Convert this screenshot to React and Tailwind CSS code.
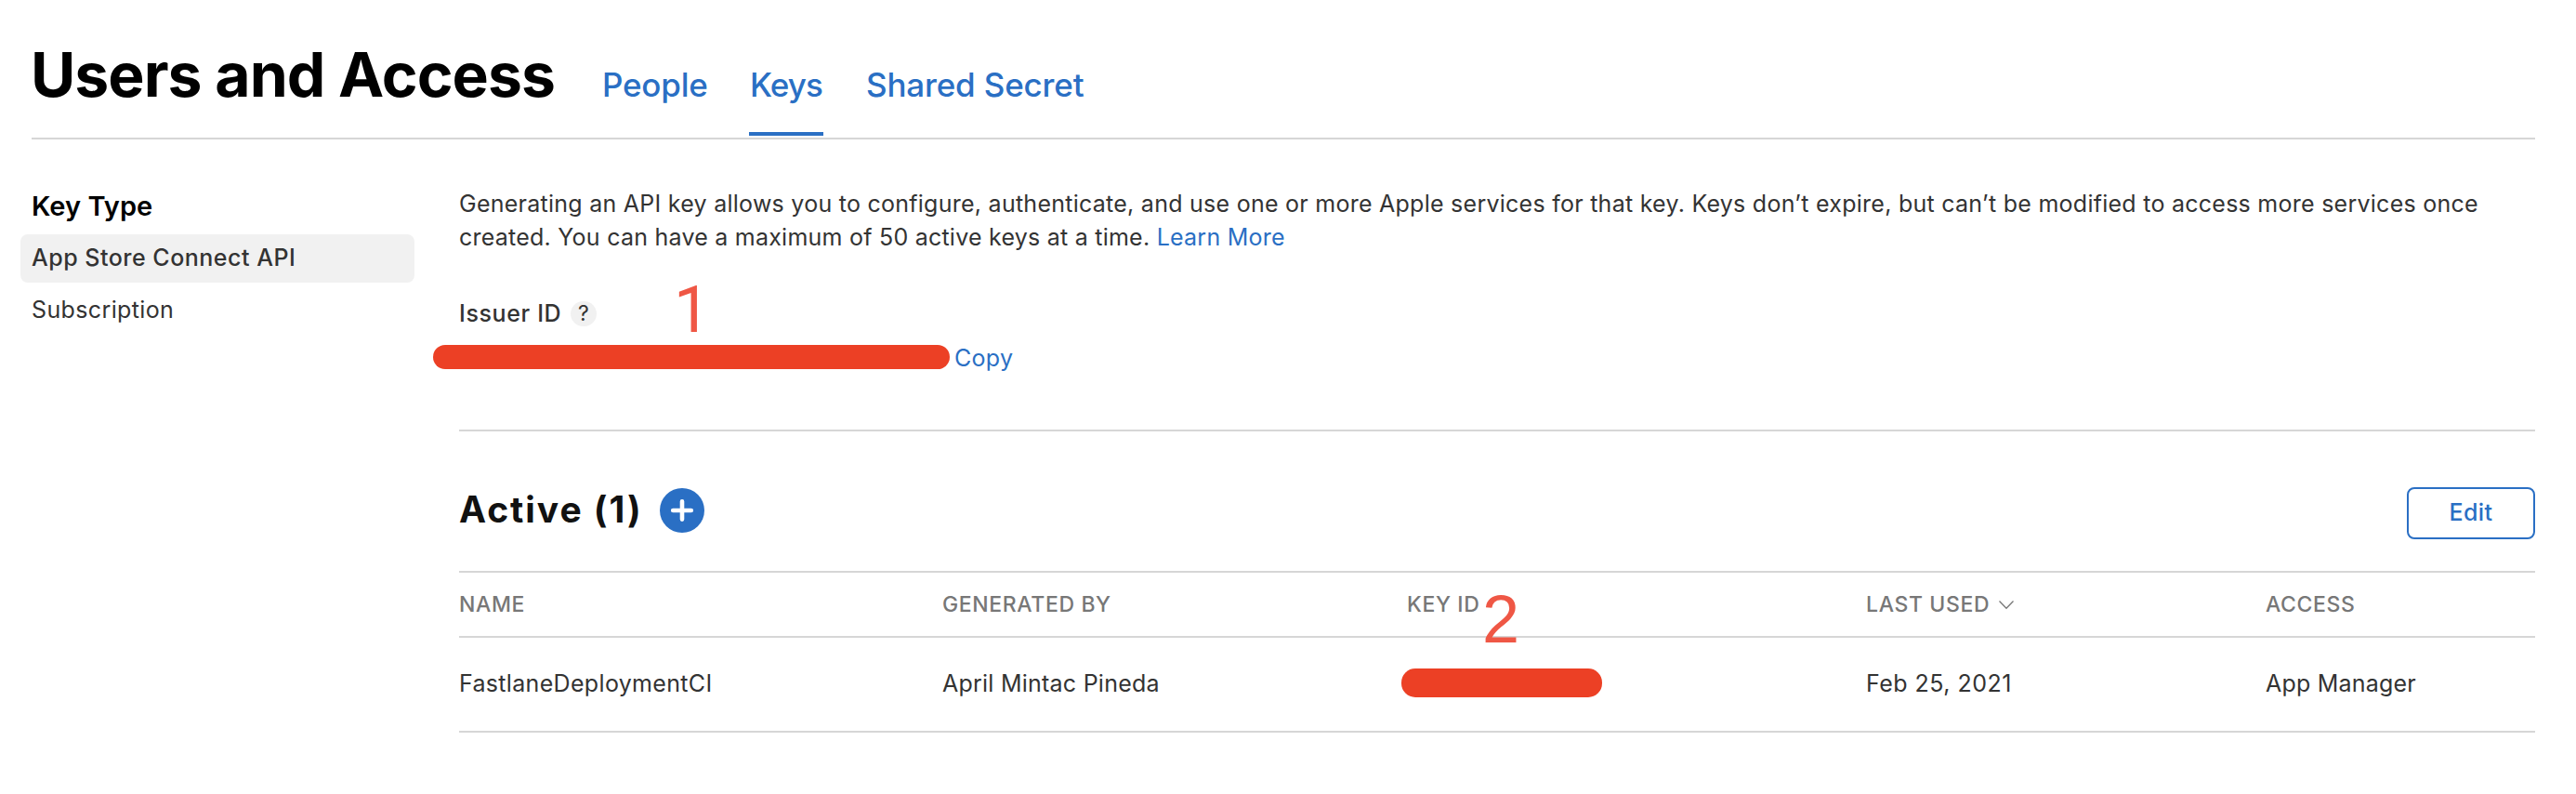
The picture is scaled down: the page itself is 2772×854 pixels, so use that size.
import React from "react";

const columns = "grid grid-cols-[520px_500px_494px_430px_290px]";

function Header() {
  return (
    <header className="mx-[34px] mr-[44px] flex h-[150px] border-b-2 border-[#d6d6d6]">
      <h1 className="w-[614px] whitespace-nowrap pt-[40px] text-[66px] font-bold leading-[80px] tracking-[-0.0146em] text-black">
        <span className="-ml-px">Users and Access</span>
      </h1>
      <nav className="flex h-[146px] whitespace-nowrap text-[35px] font-medium leading-[44px] text-[#2a6fc4]">
        <a className="w-[158px] pt-[69px] tracking-[-0.006em]">People</a>
        <a className="mr-[46px] w-[80px] border-b-4 border-[#2a6fc4] pt-[69px] pl-px tracking-[-0.025em]">Keys</a>
        <a className="pt-[69px] tracking-[-0.005em]">Shared Secret</a>
      </nav>
    </header>
  );
}

function Sidebar() {
  return (
    <aside className="ml-[22px] w-[424px] shrink-0 pt-[54px] text-[25px] text-[#333]">
      <h2 className="pl-3 text-[29px] font-semibold leading-[36px] tracking-[0.002em] text-black">Key Type</h2>
      <div className="mt-3 h-[52px] rounded-lg bg-[#f1f1f1] pl-3 font-medium leading-[50px] tracking-[0.02em]">
        App Store Connect API
      </div>
      <div className="mt-1 h-[52px] pl-3 leading-[50px] tracking-[0.015em]">Subscription</div>
    </aside>
  );
}

function Issuer() {
  return (
    <section className="relative border-b-2 border-[#d6d6d6] pt-[51px] pb-[59px]">
      <p className="whitespace-nowrap leading-[36px] tracking-[0.0103em]">
        Generating an API key allows you to configure, authenticate, and use one or more Apple services for that key. Keys
        don’t expire, but can’t be modified to access more services once
        <br />
        <span className="tracking-[0.0095em]">
          created. You can have a maximum of 50 active keys at a time.{" "}
          <a className="text-[#2a6fc4]">Learn More</a>
        </span>
      </p>
      <div className="mt-[46px] flex h-[36px] items-center">
        <span className="w-[120px] font-medium leading-[36px] tracking-[0.025em]">Issuer ID</span>
        <span className="flex h-[27px] w-[28px] items-center justify-center rounded-full bg-[#f1f1f1] text-[23px] leading-[26px]">
          ?
        </span>
      </div>
      <div className="mt-3 flex h-[36px]">
        <div className="mt-1 -ml-[28px] h-[26px] w-[556px] rounded-[13px] bg-[#ec4025]" />
        <a className="ml-[5px] leading-[36px] tracking-[0.012em] text-[#2a6fc4]">Copy</a>
      </div>
      <span className="absolute top-[148px] left-[231px] font-['Roboto',sans-serif] text-[70px] leading-[70px] text-[#ef5745]">
        1
      </span>
    </section>
  );
}

function ActiveKeys() {
  return (
    <section className="relative">
      <div className="flex h-[150px] items-start justify-between">
        <div className="flex items-start pt-[61px]">
          <h2 className="w-[216px] whitespace-nowrap text-[39px] font-bold leading-[46px] tracking-[0.05em] text-[#111]">
            Active (1)
          </h2>
          <svg width="48" height="48" viewBox="0 0 48 48">
            <circle cx="24" cy="24" r="24" fill="#2a6fc4" />
            <path d="M24 14.2v19.4M14.2 24h19.6" stroke="#fff" strokeWidth="4.6" strokeLinecap="round" />
          </svg>
        </div>
        <button className="mt-[60px] h-[56px] w-[138px] rounded-lg border-2 border-[#2a6fc4] pb-[2px] text-[25px] font-medium leading-[50px] tracking-[0.016em] text-[#2a6fc4]">
          Edit
        </button>
      </div>
      <div
        className={`${columns} h-[72px] border-y-2 border-[#d6d6d6] text-[23px] font-medium leading-[69px] tracking-[0.027em] text-[#777]`}
      >
        <span>NAME</span>
        <span>GENERATED BY</span>
        <span>KEY ID</span>
        <span className="flex">
          LAST USED
          <svg className="mt-[29px] ml-[9px]" width="18" height="12" viewBox="0 0 18 12" fill="none">
            <path d="M1.5 1.5 9 9.3l7.500-7.800" stroke="#777" strokeWidth="1.3" />
          </svg>
        </span>
        <span>ACCESS</span>
      </div>
      <div className={`${columns} h-[102px] border-b-2 border-[#d6d6d6] leading-[98px]`}>
        <span className="tracking-[0.013em]">FastlaneDeploymentCI</span>
        <span className="tracking-[0.0095em]">April Mintac Pineda</span>
        <span className="mt-[33px] -ml-[6px] h-[31px] w-[216px] rounded-[15px] bg-[#ec4025]" />
        <span className="tracking-[0.019em]">Feb 25, 2021</span>
        <span className="tracking-[0.008em]">App Manager</span>
      </div>
      <span className="absolute top-[166px] left-[1101px] font-['Liberation_Sans',sans-serif] text-[72px] leading-[72px] text-[#ef5745]">
        2
      </span>
    </section>
  );
}

export default function App() {
  return (
    <div className="h-[854px] w-[2772px] overflow-hidden bg-white font-['Inter',sans-serif] text-[25px] text-[#333]">
      <Header />
      <div className="flex">
        <Sidebar />
        <main className="ml-[48px] w-[2234px] shrink-0">
          <Issuer />
          <ActiveKeys />
        </main>
      </div>
    </div>
  );
}
